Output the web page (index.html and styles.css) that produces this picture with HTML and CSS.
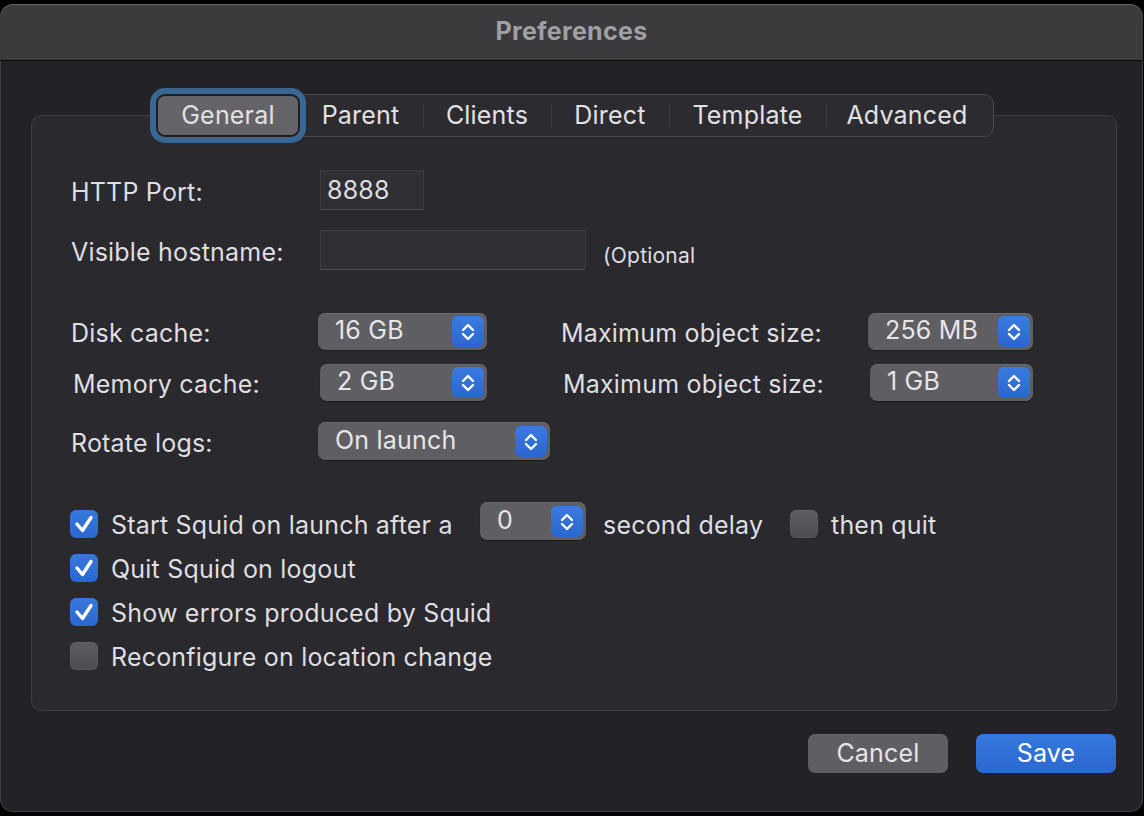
FILE: index.html
```html
<!DOCTYPE html>
<html>
<head>
<meta charset="utf-8">
<title>Preferences</title>
<link rel="stylesheet" href="styles.css">
</head>
<body>
<div class="window">
  <div class="titlebar"><span class="title">Preferences</span></div>
  <div class="main">
    <div class="tabs">
      <div class="seg">
        <div class="tab t-general selected">General</div>
        <div class="tab t-parent">Parent</div>
        <div class="tab t-clients sep">Clients</div>
        <div class="tab t-direct sep">Direct</div>
        <div class="tab t-template sep">Template</div>
        <div class="tab t-advanced sep">Advanced</div>
      </div>
    </div>
    <div class="panel">
      <div class="row r-port">
        <span class="lbl">HTTP Port:</span>
        <div class="field f-port">8888</div>
      </div>
      <div class="row r-host">
        <span class="lbl">Visible hostname:</span>
        <div class="field f-host"></div>
        <span class="hint">(Optional</span>
      </div>

      <div class="grid-row r-disk">
        <span class="glbl">Disk cache:</span>
        <div class="popup w-disk"><span class="ptext">16 GB</span><span class="stepper"><svg viewBox="0 0 32 31" width="32" height="31"><polyline points="11,14 16,9 21,14" /><polyline points="11,18 16,23 21,18" /></svg></span></div>
        <span class="glbl">Maximum object size:</span>
        <div class="popup w-max1"><span class="ptext">256 MB</span><span class="stepper"><svg viewBox="0 0 32 31" width="32" height="31"><polyline points="11,14 16,9 21,14" /><polyline points="11,18 16,23 21,18" /></svg></span></div>
      </div>
      <div class="grid-row r-mem">
        <span class="glbl">Memory cache:</span>
        <div class="popup w-mem"><span class="ptext">2 GB</span><span class="stepper"><svg viewBox="0 0 32 31" width="32" height="31"><polyline points="11,14 16,9 21,14" /><polyline points="11,18 16,23 21,18" /></svg></span></div>
        <span class="glbl">Maximum object size:</span>
        <div class="popup w-max2"><span class="ptext">1 GB</span><span class="stepper"><svg viewBox="0 0 32 31" width="32" height="31"><polyline points="11,14 16,9 21,14" /><polyline points="11,18 16,23 21,18" /></svg></span></div>
      </div>
      <div class="grid-row r-rot">
        <span class="glbl">Rotate logs:</span>
        <div class="popup w-rot"><span class="ptext">On launch</span><span class="stepper"><svg viewBox="0 0 32 31" width="32" height="31"><polyline points="11,14 16,9 21,14" /><polyline points="11,18 16,23 21,18" /></svg></span></div>
      </div>

      <div class="checks">
        <div class="check-row">
          <span class="cb on"><svg viewBox="0 0 28 28" width="28" height="28"><polyline points="7,14 12.5,20.5 21,7.5" /></svg></span>
          <span class="start-text">Start Squid on launch after a</span>
          <div class="popup w-delay"><span class="ptext">0</span><span class="stepper"><svg viewBox="0 0 32 31" width="32" height="31"><polyline points="11,14 16,9 21,14" /><polyline points="11,18 16,23 21,18" /></svg></span></div>
          <span class="delay-text">second delay</span>
          <span class="cb off"></span>
          <span>then quit</span>
        </div>
        <div class="check-row">
          <span class="cb on"><svg viewBox="0 0 28 28" width="28" height="28"><polyline points="7,14 12.5,20.5 21,7.5" /></svg></span>
          <span>Quit Squid on logout</span>
        </div>
        <div class="check-row">
          <span class="cb on"><svg viewBox="0 0 28 28" width="28" height="28"><polyline points="7,14 12.5,20.5 21,7.5" /></svg></span>
          <span>Show errors produced by Squid</span>
        </div>
        <div class="check-row">
          <span class="cb off"></span>
          <span>Reconfigure on location change</span>
        </div>
      </div>
    </div>
    <div class="buttons">
      <button class="btn cancel">Cancel</button>
      <button class="btn save">Save</button>
    </div>
  </div>
</div>
</body>
</html>
```
FILE: styles.css
```css
* { box-sizing: border-box; }
html, body { margin: 0; background: #000; }
body {
  width: 1144px;
  height: 816px;
  overflow: hidden;
  font-family: Inter, "Noto Sans", sans-serif;
  font-size: 25px;
  letter-spacing: 0.2px;
  color: #dfdee1;
}
.window {
  width: 1143px;
  height: 808px;
  margin-top: 4px;
  border-radius: 13px;
  background: #232227;
  box-shadow: inset 0 0 0 1px rgba(255,255,255,0.13);
  display: flex;
  flex-direction: column;
  overflow: hidden;
}
.titlebar {
  flex: none;
  height: 57px;
  background: #3b3a3d;
  border-bottom: 1px solid #0c0c0e;
  border-radius: 13px 13px 0 0;
  box-shadow: inset 0 1px 0 rgba(255,255,255,0.22);
  display: flex;
  align-items: center;
  justify-content: center;
  padding-bottom: 2px;
}
.title { font-weight: 700; font-size: 25px; color: #a09fa3; letter-spacing: 0.3px; }

.main { padding: 33px 26px 0 31px; }

.tabs {
  display: flex;
  position: relative;
  z-index: 1;
  margin-bottom: -22px;
  padding-left: 121px;
}
.seg {
  display: flex;
  height: 43px;
  border: 1px solid #49484d;
  border-radius: 10px;
  background: #2c2b30;
  padding: 1px 5px;
}
.tab {
  position: relative;
  display: flex;
  align-items: center;
  justify-content: center;
  color: #e2e1e4;
  padding-bottom: 1px;
}
.tab.sep::before {
  content: "";
  position: absolute;
  left: 0;
  top: 8px;
  bottom: 8px;
  width: 1px;
  background: #3c3b40;
}
.t-general { width: 140px; }
.t-parent { width: 125px; }
.t-clients { width: 128px; }
.t-direct { width: 118px; }
.t-template { width: 157px; }
.t-advanced { width: 162px; }
.selected {
  background: #646367;
  border-radius: 7px;
  box-shadow: 0 0 0 2px #1f1e23, 0 0 0 8px #3a6693;
}

.panel {
  height: 596px;
  border: 1px solid #3f3e43;
  border-radius: 10px;
  background: #2a292e;
  padding: 54px 0 0 39px;
}
.row { display: flex; align-items: center; }
.lbl { width: 249px; flex: none; padding-top: 3px; }
.r-port { height: 40px; }
.r-host { height: 40px; margin-top: 20px; }
.field {
  height: 40px;
  background: #302f34;
  border: 1px solid #3b3a3f;
  border-bottom-color: #4b4a4f;
  padding: 0 6px;
  display: flex;
  align-items: center;
}
.f-port { width: 104px; }
.f-host { width: 266px; }
.hint { font-size: 21px; margin-left: 17px; padding-top: 10px; }

.grid-row {
  display: grid;
  grid-template-columns: 247px 243px 307px auto;
  align-items: center;
}
.glbl { padding-top: 3px; }
.r-disk { margin-top: 43px; height: 37px; }
.r-mem { margin-top: 14px; height: 37px; padding-left: 2px; }
.r-rot { margin-top: 21px; height: 38px; }

.popup {
  height: 37px;
  display: flex;
  align-items: center;
  justify-content: space-between;
  background: #5f5e62;
  border-radius: 7px;
  padding: 0 3px 0 17px;
  box-shadow: 0 1px 1px rgba(0,0,0,0.35), inset 0 1px 0 rgba(255,255,255,0.07);
}
.ptext { padding-bottom: 3px; color: #e6e5e8; }
.stepper {
  width: 32px;
  height: 31px;
  border-radius: 6px;
  background: linear-gradient(#3a7be1, #2a66cf);
  display: block;
}
.stepper svg { display: block; }
.stepper polyline {
  fill: none;
  stroke: #fff;
  stroke-width: 2.4;
  stroke-linecap: round;
  stroke-linejoin: round;
}
.w-disk { width: 169px; }
.w-mem { width: 167px; }
.w-rot { width: 232px; height: 38px; }
.w-max1 { width: 165px; }
.w-max2 { width: 163px; }
.w-delay { width: 106px; height: 38px; flex: none; align-self: flex-start; margin-top: -8px; }

.checks {
  margin-top: 50px;
  margin-left: -1px;
  display: flex;
  flex-direction: column;
  gap: 16px;
}
.check-row { display: flex; align-items: center; height: 28px; }
.check-row > span:not(.cb) { padding-top: 2px; }
.cb {
  flex: none;
  width: 28px;
  height: 28px;
  border-radius: 6px;
  margin-right: 13px;
  display: block;
}
.cb svg { display: block; }
.cb polyline {
  fill: none;
  stroke: #fff;
  stroke-width: 3.4;
  stroke-linecap: round;
  stroke-linejoin: round;
}
.cb.on { background: linear-gradient(#3778dd, #2b67cf); }
.cb.off {
  background: linear-gradient(#5e5d61, #4d4c50);
  box-shadow: inset 0 0 0 1px rgba(255,255,255,0.05);
}
.start-text { width: 369px; flex: none; }
.delay-text { width: 187px; flex: none; margin-left: 17px; }

.buttons {
  display: flex;
  justify-content: flex-end;
  gap: 28px;
  margin-top: 23px;
  padding-right: 1px;
}
.btn {
  width: 140px;
  height: 39px;
  border: none;
  border-radius: 7px;
  font-family: inherit;
  font-size: 25px;
  letter-spacing: 0.2px;
  color: #e6e5e8;
  padding: 0 0 2px;
}
.cancel { background: #5f5e62; box-shadow: inset 0 1px 0 rgba(255,255,255,0.06); }
.save { background: linear-gradient(#3579de, #2b67cf); color: #fff; }
```
